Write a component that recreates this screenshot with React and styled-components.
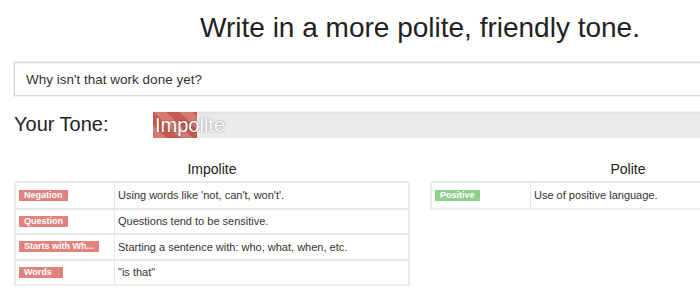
import React from 'react'
import styled, { createGlobalStyle } from 'styled-components';

const GlobalStyle = createGlobalStyle`
  body {
    margin: 0;
    background: #fff;
    font-family: "Liberation Sans", Arial, sans-serif;
    color: #333;
    overflow: hidden;
  }
`;

const Page = styled.div`
  width: 812px;
  margin-left: 14px;
`;

const Title = styled.h1`
  margin: 0;
  padding-top: 12px;
  height: 62px;
  box-sizing: border-box;
  text-align: center;
  font-size: 28px;
  font-weight: normal;
  color: #222;
  line-height: 32px;
`;

const Input = styled.input`
  display: block;
  width: 100%;
  height: 34px;
  box-sizing: border-box;
  padding: 0 11px;
  border: 1px solid #d6d6d6;
  box-shadow: 0 0 0 1px #f0f0f0, inset 0 1px 1px rgba(0,0,0,.05);
  font-family: inherit;
  font-size: 13.5px;
  color: #333;
  outline: none;
`;

const ToneRow = styled.div`
  display: flex;
  align-items: center;
  margin-top: 15px;
  height: 27px;
`;

const ToneLabel = styled.div`
  width: 139px;
  font-size: 20px;
  color: #222;
`;

const Progress = styled.div`
  flex: 1;
  height: 26px;
  position: relative;
  background: #ebebec;
  box-shadow: inset 0 2px 0 #e3e3e4;
  border-top: 1px solid #f3f3f3;
`;

const Bar = styled.div`
  height: 100%;
  background-color: #c65a50;
  background-image: linear-gradient(45deg, rgba(255,255,255,.2) 25%, transparent 25%, transparent 50%, rgba(255,255,255,.2) 50%, rgba(255,255,255,.2) 75%, transparent 75%, transparent);
  background-size: 26px 26px;
`;

const BarText = styled.span`
  position: absolute;
  left: 2px;
  top: 0;
  line-height: 26px;
  font-size: 20px;
  color: #fff;
  text-shadow: 0 0 2px rgba(0,0,0,.35), 0 0 1px rgba(0,0,0,.25);
`;

const Columns = styled.div`
  display: grid;
  grid-template-columns: 1fr 1fr;
  gap: 20px;
  margin-top: 23px;
`;

const ColTitle = styled.div`
  text-align: center;
  font-size: 14px;
  color: #222;
  height: 20px;
  line-height: 17px;
`;

const Table = styled.div`
  border: 2px solid #ececec;
  border-top-width: 1px;
`;

const Row = styled.div`
  display: grid;
  grid-template-columns: 98px 1fr;
  height: 25.5px;
  box-sizing: border-box;
  border-top: 1px solid #e6e6e6;
  & + & {
    border-top: 2px solid #e8e8e8;
  }
`;

const Cell = styled.div`
  display: flex;
  align-items: center;
  padding: 0 3px;
  font-size: 11px;
  color: #333;
  & + & {
    border-left: 1px solid #e4e4e4;
  }
`;

const Badge = styled.span`
  display: inline-block;
  background: ${p => p.$good ? '#8fcf8c' : '#e1827d'};
  color: #fff;
  font-size: 9px;
  font-weight: bold;
  line-height: 11px;
  padding: 0 5px;
  min-width: 34px;
  white-space: nowrap;
`;

const impolite = [
  ['Negation', "Using words like 'not, can't, won't'."],
  ['Question', 'Questions tend to be sensitive.'],
  ['Starts with Wh...', 'Starting a sentence with: who, what, when, etc.'],
  ['Words', '"is that"'],
];

const polite = [
  ['Positive', 'Use of positive language.'],
];

const App = () => {
  return (
    <>
      <GlobalStyle />
      <Page>
        <Title>Write in a more polite, friendly tone.</Title>
        <Input defaultValue="Why isn't that work done yet?" />
        <ToneRow>
          <ToneLabel>Your Tone:</ToneLabel>
          <Progress>
            <Bar style={{ width: '6.6%' }} />
            <BarText>Impolite</BarText>
          </Progress>
        </ToneRow>
        <Columns>
          <div>
            <ColTitle>Impolite</ColTitle>
            <Table>
              {impolite.map(([tag, text]) => (
                <Row key={tag}>
                  <Cell><Badge>{tag}</Badge></Cell>
                  <Cell>{text}</Cell>
                </Row>
              ))}
            </Table>
          </div>
          <div>
            <ColTitle>Polite</ColTitle>
            <Table>
              {polite.map(([tag, text]) => (
                <Row key={tag}>
                  <Cell><Badge $good>{tag}</Badge></Cell>
                  <Cell>{text}</Cell>
                </Row>
              ))}
            </Table>
          </div>
        </Columns>
      </Page>
    </>
  );
}

export default App
